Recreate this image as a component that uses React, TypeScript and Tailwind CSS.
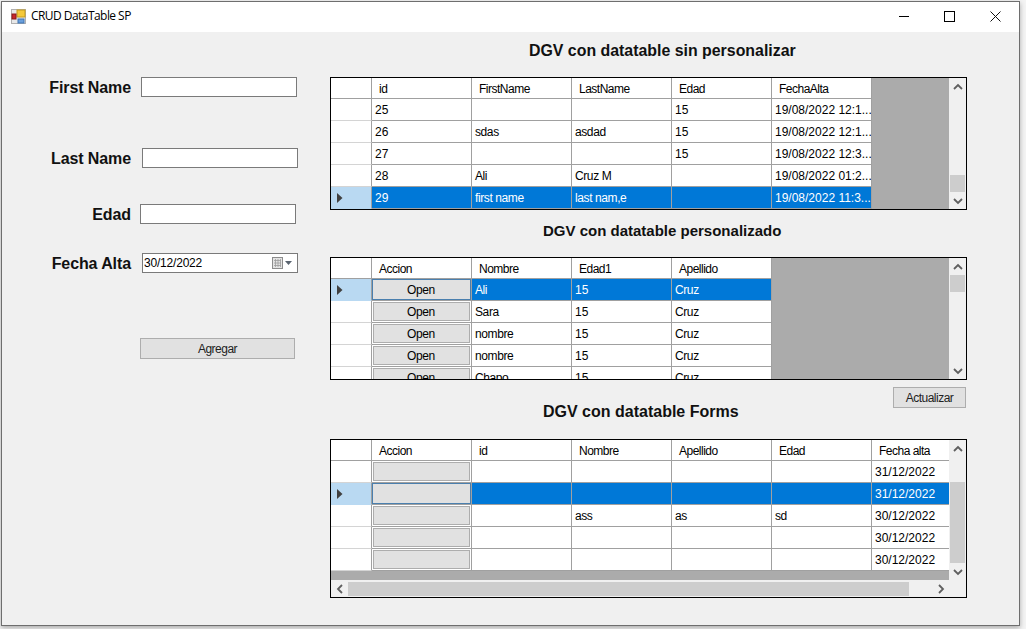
import { clsx } from "clsx";

interface GridProps {
  heightClass: string;
  columns: string[];
  rows: string[][];
  selected: number;
  buttonLabel?: string;
  thumbTop: string;
  thumbHeight: string;
  horizontal?: boolean;
}

function Chevron({ d }: { d: string }) {
  return (
    <svg width="10" height="10" viewBox="0 0 10 10">
      <path d={d} fill="none" stroke="#5f5f5f" strokeWidth="1.8" />
    </svg>
  );
}

const UP = "M1 7L5 3L9 7";
const DOWN = "M1 3L5 7L9 3";
const LEFT = "M7 1L3 5L7 9";
const RIGHT = "M3 1L7 5L3 9";

function Cell({ text, active, lastWide }: { text: string; active: boolean; lastWide?: boolean }) {
  return (
    <div
      className={clsx(
        "h-[22px] shrink-0 border-b border-r border-[#a0a0a0] pl-[3px] pt-[4px] leading-[15px] whitespace-nowrap overflow-hidden",
        lastWide ? "w-[78px]" : "w-[100px]",
        active ? "bg-[#0078d7] text-white" : "bg-white text-black",
        /[a-z]/i.test(text) && "tracking-[-0.4px]",
      )}
    >
      {text}
    </div>
  );
}

function DataGrid({ heightClass, columns, rows, selected, buttonLabel, thumbTop, thumbHeight, horizontal }: GridProps) {
  return (
    <div className={clsx("w-[637px] border border-black bg-[#ababab] flex flex-col overflow-hidden", heightClass)}>
      <div className="flex flex-1 min-h-0">
        <div className="flex-1 min-w-0 overflow-hidden">
          {/* header */}
          <div className="flex h-[21px] w-max">
            <div className="w-[41px] h-[21px] bg-white border-r border-b border-[#a0a0a0]" />
            {columns.map((c, i) => (
              <div
                key={c}
                className={clsx(
                  "h-[21px] bg-white border-b border-[#a0a0a0] pl-[7px] pt-[3px] leading-[16px] whitespace-nowrap tracking-[-0.5px]",
                  horizontal && i === columns.length - 1 ? "w-[78px]" : "w-[100px] border-r",
                )}
              >
                {c}
              </div>
            ))}
          </div>
          {rows.map((row, r) => (
            <div key={r} className="flex h-[22px] w-max">
              <div
                className={clsx(
                  "w-[41px] h-[22px] border-r border-b border-r-[#a0a0a0] flex items-center pl-[6px]",
                  r === selected ? "bg-[#b9d9f2] border-b-[#b9d9f2]" : "bg-white border-b-[#d4d4d4]",
                )}
              >
                {r === selected && (
                  <svg width="6" height="10" viewBox="0 0 6 10">
                    <path d="M0 0L5.500 5L0 10Z" fill="#404040" />
                  </svg>
                )}
              </div>
              {buttonLabel !== undefined && (
                <div className={clsx("w-[100px] h-[22px] shrink-0 border-r border-b border-[#a0a0a0] bg-white", r === selected ? "p-0" : "p-px")}>
                  <div
                    className={clsx(
                      "w-full h-full bg-[#e1e1e1] flex items-center justify-center pr-px tracking-[-0.4px] border",
                      r === selected ? "border-[#4a7fae]" : "border-[#adadad]",
                    )}
                  >
                    {buttonLabel}
                  </div>
                </div>
              )}
              {row.map((text, c) => (
                <Cell key={c} text={text} active={r === selected} lastWide={horizontal && c === row.length - 1} />
              ))}
            </div>
          ))}
        </div>
        {/* vertical scrollbar */}
        <div className="w-[17px] bg-[#f0f0f0] flex flex-col shrink-0">
          <div className="h-[17px] flex items-center justify-center shrink-0">
            <Chevron d={UP} />
          </div>
          <div className={clsx("shrink-0", thumbTop)} />
          <div className={clsx("bg-[#cdcdcd] shrink-0 mx-px", thumbHeight)} />
          <div className="flex-1" />
          <div className="h-[17px] flex items-center justify-center shrink-0">
            <Chevron d={DOWN} />
          </div>
        </div>
      </div>
      {horizontal && (
        <div className="h-[17px] flex shrink-0 border-t border-[#f0f0f0] bg-[#f0f0f0]">
          <div className="w-[17px] flex items-center justify-center">
            <Chevron d={LEFT} />
          </div>
          <div className="w-[561px] bg-[#cdcdcd] my-px" />
          <div className="w-[23px]" />
          <div className="w-[17px] flex items-center justify-center">
            <Chevron d={RIGHT} />
          </div>
          <div className="w-[17px]" />
        </div>
      )}
    </div>
  );
}

function FormRow({ label, gap, className, children }: { label: string; gap: string; className: string; children: React.ReactNode }) {
  return (
    <div className={clsx("flex items-center h-[20px]", className)}>
      <div className="w-[129px] pt-px text-right text-[16px] leading-[20px] font-bold text-[#111] whitespace-nowrap tracking-[-0.1px]">{label}</div>
      <div className={gap}>{children}</div>
    </div>
  );
}

function TextBox() {
  return <div className="w-[156px] h-[20px] bg-white border border-[#7a7a7a]" />;
}

const grid1 = [
  ["25", "", "", "15", "19/08/2022 12:1..."],
  ["26", "sdas", "asdad", "15", "19/08/2022 12:1..."],
  ["27", "", "", "15", "19/08/2022 12:3..."],
  ["28", "Ali", "Cruz M", "", "19/08/2022 01:2..."],
  ["29", "first name", "last nam,e", "", "19/08/2022 11:3..."],
];

const grid2 = [
  ["Ali", "15", "Cruz"],
  ["Sara", "15", "Cruz"],
  ["nombre", "15", "Cruz"],
  ["nombre", "15", "Cruz"],
  ["Chapo", "15", "Cruz"],
];

const grid3 = [
  ["", "", "", "", "31/12/2022"],
  ["", "", "", "", "31/12/2022"],
  ["", "ass", "as", "sd", "30/12/2022"],
  ["", "", "", "", "30/12/2022"],
  ["", "", "", "", "30/12/2022"],
];

export default function App() {
  return (
    <div className="w-[1026px] h-[629px] bg-[#f4f4f4] pl-px pt-px font-['Liberation_Sans',sans-serif] text-[12px] overflow-hidden">
      <div className="w-[1019px] h-[625px] border border-[#6e6e6e] bg-[#f0f0f0] flex flex-col shadow-[0_2px_5px_rgba(0,0,0,0.3)]">
        {/* title bar */}
        <div className="h-[30px] bg-white flex items-center shrink-0 pl-[9px] pb-[2px]">
          <svg width="15" height="15" viewBox="0 0 15 15">
            <rect x="0.500" y="0.500" width="14" height="14" fill="#e8e8e8" stroke="#b0b0b0" />
            <rect x="6" y="1" width="8" height="7" fill="#f5c93a" stroke="#c29a1c" />
            <rect x="1" y="5" width="4" height="5" fill="#c8262c" stroke="#8a1a1a" />
            <rect x="7" y="10" width="6" height="4" fill="#6a9fdc" stroke="#3f74b4" />
          </svg>
          <span className="ml-[5px] font-['Open_Sans',sans-serif] text-[12px] tracking-[-0.55px] text-black">CRUD DataTable SP</span>
          <div className="ml-auto flex items-center pr-[18px] gap-[35px]">
            <div className="w-[10px] h-px bg-black" />
            <div className="w-[11px] h-[11px] border border-black" />
            <svg width="11" height="11" viewBox="0 0 11 11">
              <path d="M0.500 0.500L10.500 10.500M10.500 0.500L0.500 10.500" stroke="#111" strokeWidth="1" />
            </svg>
          </div>
        </div>

        <div className="flex flex-1 min-h-0">
          {/* left form */}
          <div className="w-[328px] shrink-0 pt-[45px]">
            <FormRow label="First Name" gap="ml-[10px]" className="">
              <TextBox />
            </FormRow>
            <FormRow label="Last Name" gap="ml-[11px]" className="mt-[51px]">
              <TextBox />
            </FormRow>
            <FormRow label="Edad" gap="ml-[9px]" className="mt-[36px]">
              <TextBox />
            </FormRow>
            <FormRow label="Fecha Alta" gap="ml-[11px]" className="mt-[29px]">
              <div className="w-[156px] h-[20px] bg-white border border-[#7a7a7a] flex items-center pl-px text-black tracking-[-0.2px]">
                30/12/2022
                <svg className="ml-auto mr-[4px]" width="22" height="14" viewBox="0 0 22 14">
                  <rect x="1.500" y="1.500" width="10" height="11" fill="#e4e4e4" stroke="#8c8c8c" />
                  <path d="M3 4.500H10M3 7H10M3 9.500H10M4.500 3V11M7 3V11M9.500 3V11" stroke="#9c9c9c" strokeWidth="0.8" />
                  <path d="M14 5H21L17.500 9Z" fill="#5a6470" />
                </svg>
              </div>
            </FormRow>
            <button className="mt-[65px] ml-[138px] w-[155px] h-[21px] bg-[#e1e1e1] border border-[#adadad] text-[#222] tracking-[-0.5px] block">
              Agregar
            </button>
          </div>

          {/* grids */}
          <div className="flex-1 min-w-0">
            <div className="pl-[199px] mt-[10px] h-[18px] text-[15.9px] leading-[18px] font-bold text-[#111] whitespace-nowrap">
              DGV con datatable sin personalizar
            </div>
            <div className="mt-[17px]">
              <DataGrid
                heightClass="h-[133px]"
                columns={["id", "FirstName", "LastName", "Edad", "FechaAlta"]}
                rows={grid1}
                selected={4}
                thumbTop="h-[80px]"
                thumbHeight="h-[17px]"
              />
            </div>
            <div className="pl-[213px] mt-[12px] h-[18px] text-[15px] leading-[18px] font-bold text-[#111] whitespace-nowrap">
              DGV con datatable personalizado
            </div>
            <div className="mt-[17px]">
              <DataGrid
                heightClass="h-[123px]"
                columns={["Accion", "Nombre", "Edad1", "Apellido"]}
                rows={grid2}
                selected={0}
                buttonLabel="Open"
                thumbTop="h-0"
                thumbHeight="h-[17px]"
              />
            </div>
            <div className="flex justify-between w-[636px] h-[34px] mt-[7px]">
              <div className="self-end pl-[213px] h-[18px] text-[16px] leading-[18px] font-bold text-[#111] whitespace-nowrap">
                DGV con datatable Forms
              </div>
              <button className="self-start w-[73px] h-[21px] bg-[#e1e1e1] border border-[#adadad] text-[#222] tracking-[-0.5px]">
                Actualizar
              </button>
            </div>
            <div className="mt-[18px]">
              <DataGrid
                heightClass="h-[159px]"
                columns={["Accion", "id", "Nombre", "Apellido", "Edad", "Fecha alta"]}
                rows={grid3}
                selected={1}
                buttonLabel=""
                thumbTop="h-[25px]"
                thumbHeight="h-[81px]"
                horizontal
              />
            </div>
          </div>
        </div>
      </div>
    </div>
  );
}
